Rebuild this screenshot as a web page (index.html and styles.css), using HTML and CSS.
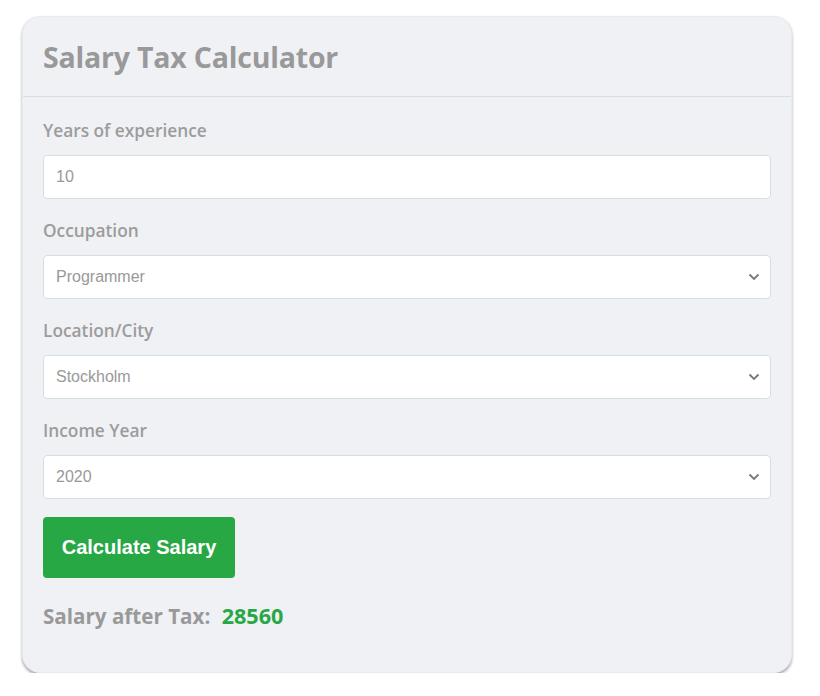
FILE: index.html
```html
<!DOCTYPE html>
<html>
<head>
<meta charset="utf-8">
<link rel="stylesheet" href="styles.css">
</head>
<body>
<div class="card">
  <div class="card-header">
    <h1 class="title">Salary Tax Calculator</h1>
  </div>
  <div class="card-body">
    <div class="field">
      <label class="label">Years of experience</label>
      <input class="control" type="text" value="10">
    </div>
    <div class="field">
      <label class="label">Occupation</label>
      <div class="select">
        <span>Programmer</span>
        <svg class="chev" width="12" height="8" viewBox="0 0 12 8"><path d="M1.5 1.5 L6 6 L10.5 1.5" fill="none" stroke="#777" stroke-width="1.8"/></svg>
      </div>
    </div>
    <div class="field">
      <label class="label">Location/City</label>
      <div class="select">
        <span>Stockholm</span>
        <svg class="chev" width="12" height="8" viewBox="0 0 12 8"><path d="M1.5 1.5 L6 6 L10.5 1.5" fill="none" stroke="#777" stroke-width="1.8"/></svg>
      </div>
    </div>
    <div class="field">
      <label class="label">Income Year</label>
      <div class="select">
        <span>2020</span>
        <svg class="chev" width="12" height="8" viewBox="0 0 12 8"><path d="M1.5 1.5 L6 6 L10.5 1.5" fill="none" stroke="#777" stroke-width="1.8"/></svg>
      </div>
    </div>
    <button class="btn">Calculate Salary</button>
    <div class="result">Salary after Tax: <span class="amount">28560</span></div>
  </div>
</div>
</body>
</html>
```

FILE: styles.css
```css
body {
  margin: 0;
  background: #ffffff;
  font-family: "Open Sans", "Noto Sans", sans-serif;
}
.card {
  margin: 16px 0 0 22px;
  width: 770px;
  box-sizing: border-box;
  background: #f0f1f5;
  border-radius: 18px;
  border: 1px solid #e8eaee;
  box-shadow: 0 2px 3px rgba(0,0,0,0.35);
  height: 657px;
}
.card-header {
  height: 79px;
  border-bottom: 1px solid #d3dfe2;
  display: flex;
  align-items: center;
  padding: 0 20px;
}
.title {
  margin: 0;
  font-size: 28.5px;
  font-weight: 700;
  color: #999999;
  letter-spacing: -0.2px;
}
.card-body {
  padding: 22px 20px 0 20px;
  display: flex;
  flex-direction: column;
}
.field {
  display: flex;
  flex-direction: column;
  margin-bottom: 20px;
}
.label {
  font-size: 17.3px;
  font-weight: 600;
  color: #9c9c9c;
  line-height: 24px;
  margin-bottom: 12px;
}
.control, .select {
  box-sizing: border-box;
  height: 44px;
  width: 728px;
  background: #ffffff;
  border: 1px solid #d3dfe2;
  border-radius: 4px;
  font-family: "Liberation Sans", Arial, sans-serif;
  font-size: 16px;
  color: #999999;
  padding: 0 12px;
}
.control {
  outline: none;
}
.select {
  display: flex;
  align-items: center;
  justify-content: space-between;
}
.chev {
  margin-right: -2px;
}
.btn {
  align-self: flex-start;
  margin-top: -2px;
  width: 192px;
  height: 61px;
  background: #28a745;
  border: none;
  border-radius: 4px;
  color: #ffffff;
  font-family: "Liberation Sans", Arial, sans-serif;
  font-weight: 700;
  font-size: 20px;
}
.result {
  margin-top: 24px;
  font-size: 20.6px;
  font-weight: 700;
  color: #999999;
  line-height: 28px;
}
.amount {
  color: #28a745;
  margin-left: 6px;
  font-size: 21.6px;
}
```
